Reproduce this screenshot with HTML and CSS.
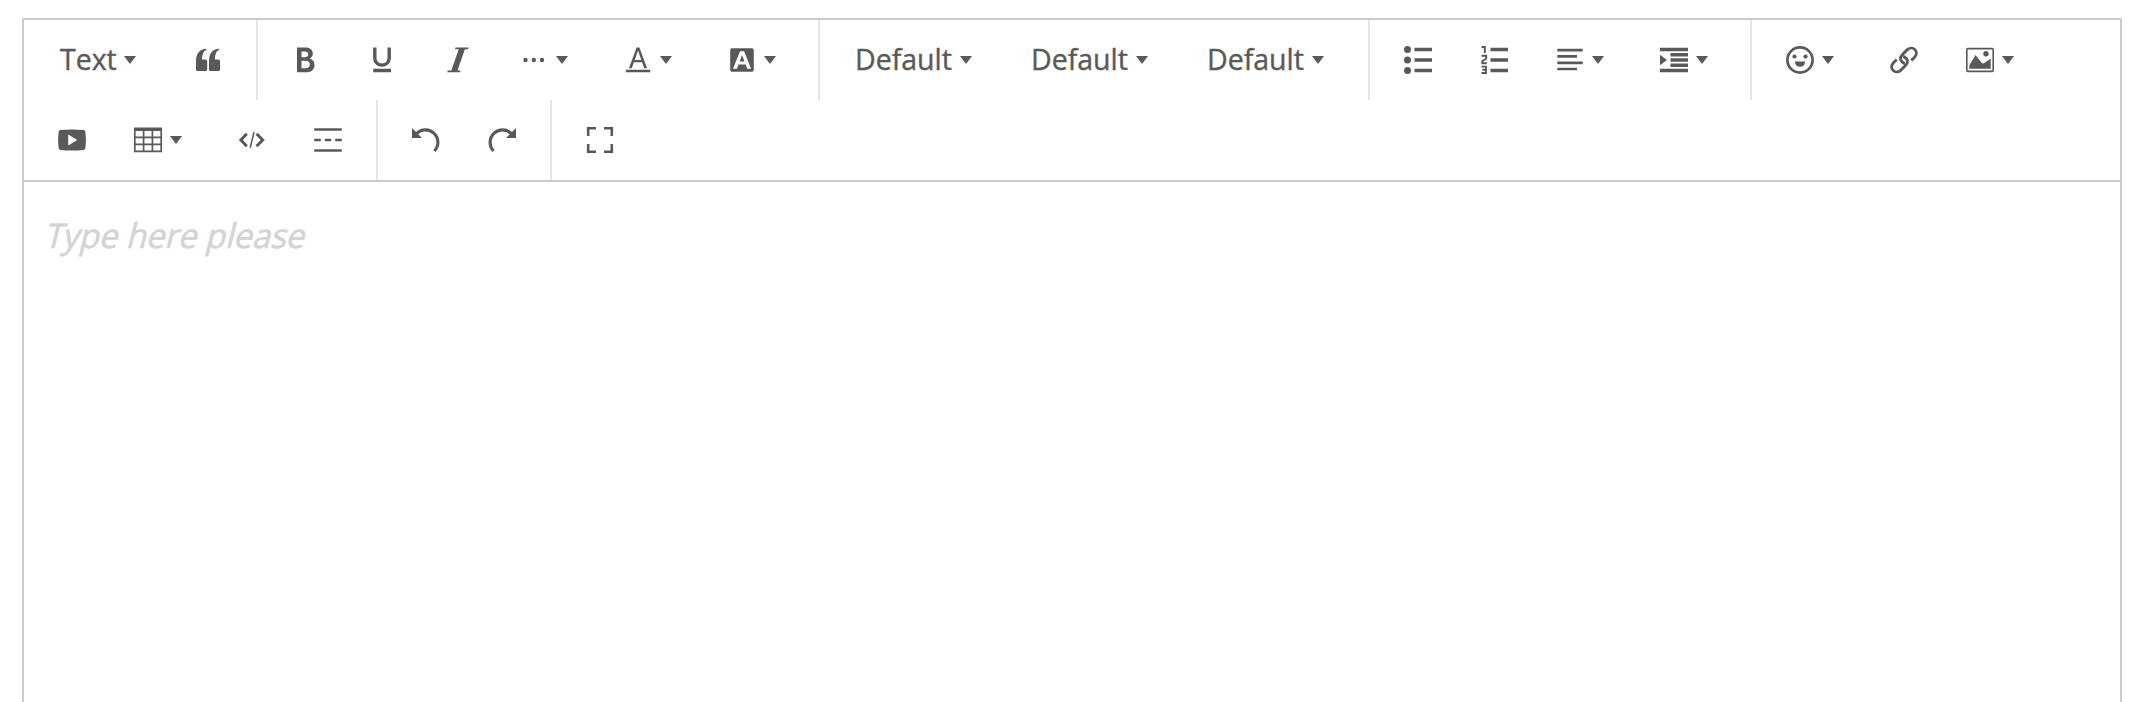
FILE: index.html
```html
<!DOCTYPE html>
<html lang="en">
<head>
<meta charset="utf-8">
<title>Editor</title>
<link rel="stylesheet" href="styles.css">
</head>
<body>
<div class="editor">
  <div class="toolbar">
    <div class="row">
      <div class="group">
        <button class="btn select select-text"><span class="label">Text</span><i class="caret"></i></button>
        <button class="btn"><svg class="icon" viewBox="0 0 28 28"><path d="M2 15Q2 3.500 12.500 2.700V3.800Q8.200 5.500 8 13.500H11.500Q13.200 13.500 13.200 15.200V23.500Q13.200 25 11.700 25H3.500Q2 25 2 23.500ZM15 15Q15 3.500 25.200 2.700V3.800Q21 5.500 20.800 13.500H24.300Q26 13.500 26 15.200V23.500Q26 25 24.500 25H16.500Q15 25 15 23.500Z"/></svg></button>
      </div>
      <div class="group">
        <button class="btn"><svg class="icon" viewBox="0 0 28 28"><path fill-rule="evenodd" d="M5 1.500H13.500C18 1.500 20.800 4 20.800 7.500C20.800 10 19.500 11.800 17.800 12.600C20.500 13.500 22.500 15.600 22.500 19C22.500 23.500 19.200 26.300 14.500 26.300H5ZM9.500 5.500V11.200H12.800C15 11.200 16.200 10.200 16.200 8.300C16.200 6.400 15 5.500 12.800 5.500ZM9.500 14.800V22.300H13.500C16.300 22.300 17.800 21 17.800 18.500C17.800 16 16.300 14.800 13.500 14.800Z"/></svg></button>
        <button class="btn"><svg class="icon" viewBox="0 0 28 28"><path class="line" stroke-width="3.400" d="M6.800 1.500V12C6.800 21.500 21.200 21.500 21.200 12V1.500M5.200 24.500H23"/></svg></button>
        <button class="btn"><svg class="icon" viewBox="0 0 28 28"><path d="M11.500 1.600H24.700L24.200 3.300H20.900L13.500 24.400H16.500L16 26.200H3.300L3.800 24.400H7.300L14.800 3.300H11Z"/></svg></button>
        <button class="btn menu"><svg class="icon" viewBox="0 0 28 28"><circle cx="5.500" cy="14" r="2.200"/><circle cx="13.800" cy="14" r="2.200"/><circle cx="22" cy="14" r="2.200"/></svg><i class="caret"></i></button>
        <button class="btn menu"><svg class="icon" viewBox="0 0 28 28"><path fill-rule="evenodd" d="M12.600 1.500H15.400L23.100 22.200H20.200L18.100 16.200H9.900L7.800 22.200H4.900ZM14 4.500L10.700 13.900H17.300ZM1.800 23.800H26.200V26.200H1.800Z"/></svg><i class="caret"></i></button>
        <button class="btn menu"><svg class="icon" viewBox="0 0 28 28"><path fill-rule="evenodd" d="M4 2.200H24Q25.800 2.200 25.800 4V24Q25.800 25.800 24 25.800H4Q2.200 25.800 2.200 24V4Q2.200 2.200 4 2.200ZM12 5.300L5 22.700H8.900L10.400 18.600H17.700L19.200 22.700H23.100L16.100 5.300ZM14 9L16.500 15.500H11.600Z"/></svg><i class="caret"></i></button>
      </div>
      <div class="group">
        <button class="btn select"><span class="label">Default</span><i class="caret"></i></button>
        <button class="btn select"><span class="label">Default</span><i class="caret"></i></button>
        <button class="btn select"><span class="label">Default</span><i class="caret"></i></button>
      </div>
      <div class="group">
        <button class="btn"><svg class="icon" viewBox="0 0 28 28"><circle cx="3.500" cy="3.500" r="3.500"/><circle cx="3.500" cy="14" r="3.500"/><circle cx="3.500" cy="24.500" r="3.500"/><path class="line" stroke-width="3.500" d="M10.500 3.500H28M10.500 14H28M10.500 24.500H28"/></svg></button>
        <button class="btn"><svg class="icon" viewBox="0 0 28 28"><path class="line" stroke-width="3.500" d="M10.500 3.500H28M10.500 14H28M10.500 24.500H28"/><path class="line" stroke-width="1.900" d="M1.500 1H4.800V7M1.500 9.800H6.200V12.800L2.300 15V17.300H6.800M1.500 20.600H6V27H1.500M2.300 23.700H6"/></svg></button>
        <button class="btn menu"><svg class="icon" viewBox="0 0 28 28"><path class="line" stroke-width="2.700" d="M1.300 4.100H26.700M1.300 10.400H21M1.300 16.800H26.700M1.300 23H21"/></svg><i class="caret"></i></button>
        <button class="btn menu"><svg class="icon" viewBox="0 0 28 28"><path d="M0 8.800L7 14L0 19.200Z"/><path class="line" stroke-width="3.500" d="M0 3.500H28M0 24.500H28M10.500 8.700H28M10.500 14H28M10.500 19.300H28"/></svg><i class="caret"></i></button>
      </div>
      <div class="group group-last">
        <button class="btn menu"><svg class="icon" viewBox="0 0 28 28"><circle class="line" stroke-width="2.700" cx="14" cy="14" r="12.600"/><circle cx="8.500" cy="10.500" r="2.100"/><circle cx="19.500" cy="10.500" r="2.100"/><path d="M8.800 15.500H19.200Q18.700 20.800 14 20.800T8.800 15.500Z"/></svg><i class="caret"></i></button>
        <button class="btn"><svg class="icon" viewBox="0 0 28 28"><path class="line" stroke-width="2.800" d="M14.800 17.600C9.800 15.500 9.500 11.500 12 9L17.600 3.400C22.500-.8 29.400 5.500 25 10.700L21.300 14.400M13.200 10.400C18.200 12.500 18.500 16.500 16 19L10.400 24.600C5.500 28.800-1.400 22.500 3 17.300L6.700 13.600"/></svg></button>
        <button class="btn menu"><svg class="icon" viewBox="0 0 28 28"><rect class="line" stroke-width="1.600" x=".8" y="2.600" width="26.400" height="22.800" rx="1"/><circle cx="20" cy="7.700" r="2.700"/><path d="M3.300 22.800V19.500L9.500 9L16 17.200L17.500 17.500L24.700 12.700V22.800Z"/></svg><i class="caret"></i></button>
      </div>
    </div>
    <div class="row">
      <div class="group">
        <button class="btn"><svg class="icon" viewBox="0 0 28 28"><path fill-rule="evenodd" d="M2 4.100Q14 2.700 26 4.100Q27.200 4.600 27.400 6Q28.500 14 27.400 22Q27.200 23.400 26 23.900Q14 25.300 2 23.900Q.8 23.400 .6 22Q-.5 14 .6 6Q.8 4.600 2 4.100ZM10.200 8.500V19.500L19.200 14Z"/></svg></button>
        <button class="btn menu"><svg class="icon" viewBox="0 0 28 28"><path class="line" stroke-width="1.700" d="M.8 2V25.300H27.200V2M9.600 3V25M18.400 3V25M0 11.400H28M0 18.300H28"/><path d="M0 1.500H28V5H0Z"/></svg><i class="caret"></i></button>
        <button class="btn"><svg class="icon" viewBox="0 0 28 28"><path class="line" stroke-width="3" d="M8.800 7.800L2.900 14L8.800 20.200M18.600 7.800L24.700 14L18.600 20.200"/><path class="line" stroke-width="1.500" d="M16 6.200L12.200 21.800"/></svg></button>
        <button class="btn"><svg class="icon" viewBox="0 0 28 28"><path class="line round" stroke-width="2.400" d="M1.200 3.500H26.800M1.200 24.500H26.800M1.200 14H5.800M11.700 14H16.300M22.200 14H26.800"/></svg></button>
      </div>
      <div class="group">
        <button class="btn"><svg class="icon" viewBox="0 0 28 28"><path class="line" stroke-width="3.100" d="M22.400 25A12.400 12.400 0 0 0 4.500 7.700"/><path d="M0 2V12H10Z"/></svg></button>
        <button class="btn"><svg class="icon" viewBox="0 0 28 28"><path class="line" stroke-width="3.100" d="M5.600 25A12.400 12.400 0 0 1 23.500 7.700"/><path d="M28 2V12H18Z"/></svg></button>
      </div>
      <div class="group group-last">
        <button class="btn"><svg class="icon" viewBox="0 0 28 28"><path class="line" stroke-width="2.600" d="M2.200 10V2.200H10M18 2.200H25.800V10M25.800 18V25.800H18M10 25.800H2.200V18"/></svg></button>
      </div>
    </div>
  </div>
  <div class="content"><p class="placeholder">Type here please</p></div>
</div>
</body>
</html>
```
FILE: styles.css
```css
* { box-sizing: border-box; }
body { margin: 0; background: #fff; height: 702px; overflow: hidden; padding: 18px 14px 0 22px; font-family: "Open Sans", "Noto Sans", sans-serif; }
.editor { height: 684px; border: 2px solid #ccc; border-bottom: 0; }
.toolbar { border-bottom: 2px solid #ccc; }
.row { display: flex; height: 80px; }
.group { display: flex; padding: 0 10px; border-right: 2px solid #e6e6e6; }
.group-last { border-right: 0; }
.btn { display: flex; align-items: center; width: 76px; height: 80px; margin: 0; padding: 0 0 0 24px; border: 0; background: none; color: #595959; font: inherit; }
.menu { width: 104px; gap: 8px; }
.select { width: 176px; justify-content: space-between; padding: 0 34px 0 25px; }
.select-text { width: 136px; }
.icon { display: block; flex: none; width: 28px; height: 28px; fill: #595959; overflow: visible; }
.line { fill: none; stroke: #595959; }
.round { stroke-linecap: round; }
.caret { flex: none; width: 12px; height: 8px; background: #595959; clip-path: polygon(0 0, 100% 0, 50% 100%); }
.label { width: 98px; flex: none; margin-right: -8px; padding-bottom: 2px; text-align: left; font-size: 30px; line-height: 40px; white-space: nowrap; transform: scaleX(.95); transform-origin: left; -webkit-text-stroke: .4px #595959; }
.select-text .label { width: 60px; margin-left: 1px; }
.content { padding: 29px 23px; }
.placeholder { width: max-content; margin: 0; color: #d4d4d4; font-size: 34px; line-height: 48px; white-space: nowrap; transform: skewX(-14deg) scaleX(.967); transform-origin: left; -webkit-text-stroke: .6px #d4d4d4; }
```
